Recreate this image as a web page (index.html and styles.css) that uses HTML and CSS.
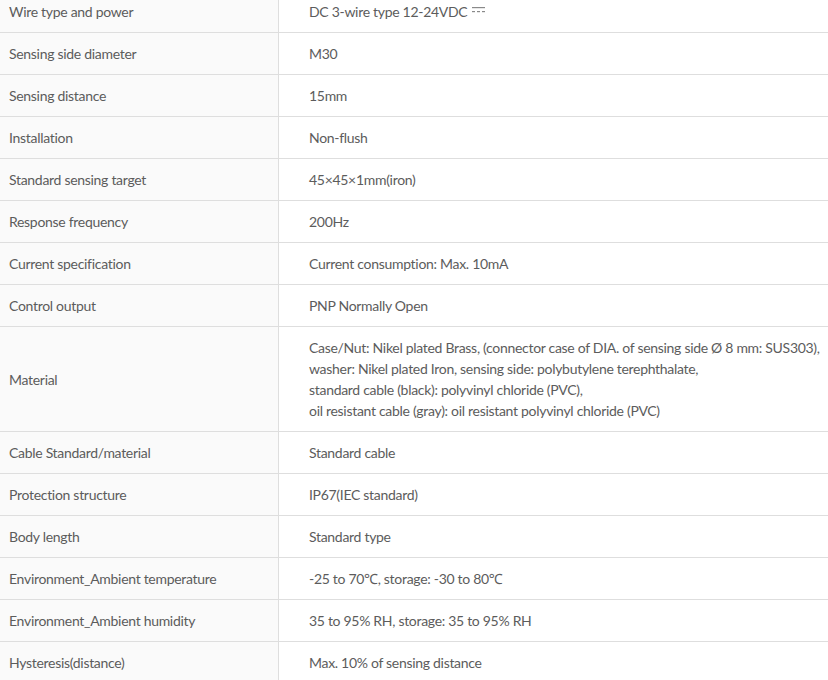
FILE: index.html
```html
<!DOCTYPE html>
<html lang="en">
<head>
<meta charset="utf-8">
<title>Specifications</title>
<link rel="stylesheet" href="styles.css">
</head>
<body>
<div class="spec-wrap">
<table class="spec">
<tbody>
<tr><th>Wire type and power</th><td>DC 3-wire type 12-24VDC <svg class="dc" width="13" height="6" viewBox="0 0 13 6" aria-label="⎓"><rect x="0" y="0" width="13" height="1.2" fill="#8a8a8a"/><rect x="0" y="4" width="3" height="1.2" fill="#8a8a8a"/><rect x="5" y="4" width="3" height="1.2" fill="#8a8a8a"/><rect x="10" y="4" width="3" height="1.2" fill="#8a8a8a"/></svg></td></tr>
<tr><th>Sensing side diameter</th><td>M30</td></tr>
<tr><th>Sensing distance</th><td>15mm</td></tr>
<tr><th>Installation</th><td>Non-flush</td></tr>
<tr><th>Standard sensing target</th><td>45×45×1mm(iron)</td></tr>
<tr><th>Response frequency</th><td>200Hz</td></tr>
<tr><th>Current specification</th><td>Current consumption: Max. 10mA</td></tr>
<tr><th>Control output</th><td>PNP Normally Open</td></tr>
<tr><th>Material</th><td>Case/Nut: Nikel plated Brass, (connector case of DIA. of sensing side Ø 8 mm: SUS303),<br>washer: Nikel plated Iron, sensing side: polybutylene terephthalate,<br>standard cable (black): polyvinyl chloride (PVC),<br>oil resistant cable (gray): oil resistant polyvinyl chloride (PVC)</td></tr>
<tr><th>Cable Standard/material</th><td>Standard cable</td></tr>
<tr><th>Protection structure</th><td>IP67(IEC standard)</td></tr>
<tr><th>Body length</th><td>Standard type</td></tr>
<tr><th>Environment_Ambient temperature</th><td>-25 to 70℃, storage: -30 to 80℃</td></tr>
<tr><th>Environment_Ambient humidity</th><td>35 to 95% RH, storage: 35 to 95% RH</td></tr>
<tr><th>Hysteresis(distance)</th><td>Max. 10% of sensing distance</td></tr>
</tbody>
</table>
</div>
</body>
</html>
```
FILE: styles.css
```css
html, body {
  margin: 0;
  padding: 0;
  background: #ffffff;
}
body {
  font-family: Lato, "Open Sans", "Noto Sans", sans-serif;
  font-size: 14px;
  letter-spacing: -0.3px;
  color: #5c5c5c;
  overflow: hidden;
}
.spec-wrap {
  margin-top: -9px;
}
.spec {
  width: 100%;
  border-collapse: collapse;
  table-layout: fixed;
}
.spec th,
.spec td {
  font-weight: normal;
  text-align: left;
  vertical-align: middle;
  line-height: 21px;
  padding: 10px 0;
  border-bottom: 1px solid #dedede;
}
.spec th {
  width: 269px;
  padding-left: 9px;
  background: #fafafa;
  border-right: 1px solid #dedede;
}
.spec td {
  padding-left: 30px;
  white-space: nowrap;
}
.dc {
  display: inline-block;
  vertical-align: 4px;
  margin-left: 1px;
}
```
